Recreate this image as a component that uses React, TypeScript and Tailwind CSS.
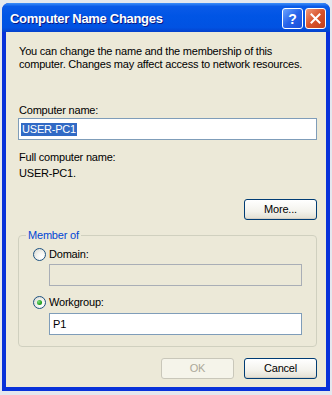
const font = { fontFamily: '"Liberation Sans", Arial, sans-serif' };

const Radio = ({ checked }: { checked?: boolean }) => (
  <span className="flex h-[13px] w-[13px] shrink-0 items-center justify-center rounded-full border border-[#1c5180] bg-[radial-gradient(circle_at_70%_70%,#ffffff_0%,#f4f4f0_40%,#d4d4cc_100%)]">
    {checked && (
      <span className="h-[5px] w-[5px] rounded-full bg-[radial-gradient(circle_at_35%_35%,#7fe07f_0%,#21a121_60%,#137013_100%)]" />
    )}
  </span>
);

const XpButton = ({ label, disabled }: { label: string; disabled?: boolean }) => (
  <button
    className={
      disabled
        ? "h-[21px] w-[73px] rounded-[3px] border border-[#c9c7ba] bg-[#f5f4ea] text-[11px] text-[#aca899]"
        : "h-[21px] w-[73px] rounded-[3px] border border-[#003c74] bg-[linear-gradient(#ffffff,#f3f2ec_60%,#e3dfd2)] text-[11px] text-black shadow-[inset_0_-1px_0_#d6d0c5]"
    }
  >
    {label}
  </button>
);

export default function App() {
  return (
    <div className="h-[395px] w-[332px] bg-[#e4e7ee] pl-[2px] pt-[3px]" style={font}>
      <div className="flex h-[388px] w-[328px] flex-col overflow-hidden rounded-t-[7px] bg-[#0831d9]">
        {/* title bar */}
        <div className="flex h-[29px] shrink-0 items-center bg-[linear-gradient(#3d8ef9_0%,#0a5ae8_12%,#0055e5_45%,#0152e2_85%,#0541cc_100%)] pl-[8px] pr-[4px]">
          <span className="flex-1 pt-[3px] text-[13px] font-bold tracking-[-0.3px] text-white [text-shadow:1px_1px_0_#0a1883]">
            Computer Name Changes
          </span>
          <div className="flex gap-[2px] pt-[2px]">
            <span className="flex h-[21px] w-[21px] items-center justify-center rounded-[3px] border border-white bg-[linear-gradient(135deg,#6aa4ff,#2663ea_50%,#1a4fd8)] text-[14px] font-bold leading-none text-white">
              ?
            </span>
            <span className="flex h-[21px] w-[21px] items-center justify-center rounded-[3px] border border-white bg-[linear-gradient(135deg,#f0997a,#d9532b_50%,#c1401c)]">
              <svg width="11" height="11" viewBox="0 0 11 11">
                <path d="M1.5 1.5 L9.5 9.5 M9.5 1.5 L1.5 9.5" stroke="white" strokeWidth="2" strokeLinecap="square" />
              </svg>
            </span>
          </div>
        </div>

        {/* client area */}
        <div className="mx-[4px] mb-[4px] flex flex-1 flex-col bg-[#ece9d8] pl-[12px] pr-[9px] text-[11px] leading-[13px] tracking-[-0.2px] text-black">
          <p className="mt-[13px] pl-[1px]">
            You can change the name and the membership of this
            <br />
            computer. Changes may affect access to network resources.
          </p>

          <div className="mt-[33px] pl-[1px]">Computer name:</div>
          <div className="mt-[1px] flex h-[22px] items-center border border-[#7f9db9] bg-white pl-[2px]">
            <span className="bg-[#316ac5] px-[1px] text-white">USER-PC1</span>
          </div>

          <div className="mt-[11px] pl-[1px]">Full computer name:</div>
          <div className="mt-[3px] pl-[1px]">USER-PC1.</div>

          <div className="mt-[19px] flex justify-end">
            <XpButton label="More..." />
          </div>

          <fieldset className="mt-[9px] h-[118px] rounded-[4px] border border-[#d0d0bf] pb-[12px]">
            <legend className="ml-[7px] px-[2px] text-[#0046d5]">Member of</legend>
            <div className="flex flex-col pl-[14px] pr-[14px]">
              <label className="mt-[6px] flex items-center gap-[3px]">
                <Radio />
                <span>Domain:</span>
              </label>
              <div className="ml-[16px] mt-[3px] h-[22px] border border-[#a9aeb6] bg-[#ece9d8]" />
              <label className="mt-[10px] flex items-center gap-[3px]">
                <Radio checked />
                <span>Workgroup:</span>
              </label>
              <div className="ml-[16px] mt-[4px] flex h-[22px] items-center border border-[#7f9db9] bg-white pl-[3px]">
                P1
              </div>
            </div>
          </fieldset>

          <div className="mt-[11px] flex justify-end gap-[10px]">
            <XpButton label="OK" disabled />
            <XpButton label="Cancel" />
          </div>
        </div>
      </div>
    </div>
  );
}
